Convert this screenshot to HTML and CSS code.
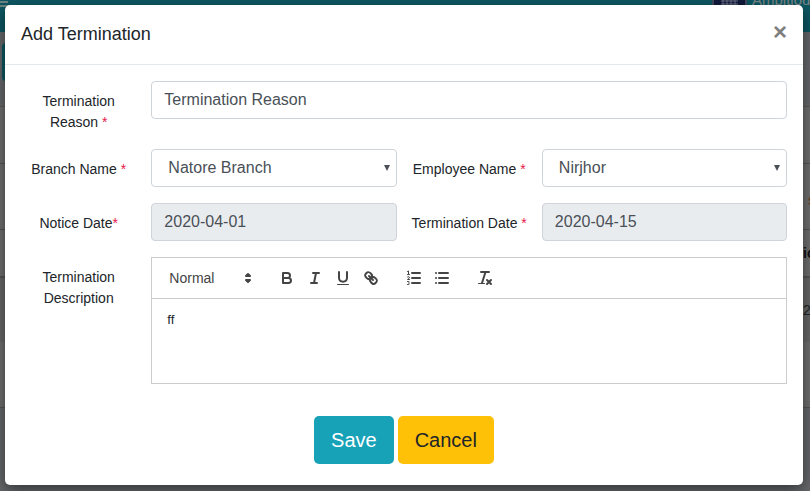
FILE: index.html
```html
<!DOCTYPE html>
<html lang="en">
<head>
<meta charset="utf-8">
<title>Add Termination</title>
<link rel="stylesheet" href="styles.css">
</head>
<body>
<div class="page" aria-hidden="true">
  <div class="navbar">
    <svg class="menu" width="8" height="10" viewBox="0 0 8 10"><path d="M0 2h8M0 6h8" stroke="#6f8385" stroke-width="2"/></svg>
    <div class="brand">
      <svg class="brand-logo" width="35" height="5" viewBox="0 0 35 5"><path fill="#111a3c" d="M0 0h35v5H0z"/><path d="M1 0v5M34 0v5" stroke="#76797d"/><path d="M9 1h17M9 4h17M11 0v5M15 0v5M19 0v5M23 0v5" stroke="#6d7185"/></svg>
      <span class="brand-name">Ambitious</span>
    </div>
  </div>
  <div class="heading-bar"><span class="add-tab"></span></div>
  <div class="panel">
    <div class="panel-line filter"></div>
    <div class="panel-line search"><span>s</span></div>
    <div class="panel-line head"><b>ic</b></div>
    <div class="panel-line cell"><span>2</span></div>
    <div class="panel-line rest"></div>
  </div>
</div>
<main class="modal" role="dialog" aria-labelledby="modal-title">
  <header class="modal-header">
    <h1 id="modal-title">Add Termination</h1>
    <button class="close" type="button" aria-label="Close">×</button>
  </header>
  <form class="modal-body">
    <div class="form-grid">
      <label for="reason">Termination Reason <span class="req">*</span></label>
      <input class="control wide" id="reason" type="text" placeholder="Termination Reason">
      <label for="branch">Branch Name <span class="req">*</span></label>
      <div class="select-wrap"><select class="control" id="branch"><option>Natore Branch</option></select></div>
      <label for="employee">Employee Name <span class="req">*</span></label>
      <div class="select-wrap"><select class="control" id="employee"><option>Nirjhor</option></select></div>
      <label for="notice">Notice Date<span class="req">*</span></label>
      <input class="control" id="notice" type="text" value="2020-04-01" readonly>
      <label for="date">Termination Date <span class="req">*</span></label>
      <input class="control" id="date" type="text" value="2020-04-15" readonly>
      <label for="description">Termination Description</label>
      <div class="editor wide">
        <div class="toolbar">
          <button class="format" type="button">Normal
            <svg width="18" height="18" viewBox="0 0 18 18"><path class="solid" d="M7 11 9 13 11 11zM7 7 9 5 11 7z"/></svg>
          </button>
          <div class="tools">
            <button type="button" aria-label="Bold"><svg viewBox="0 0 18 18"><path d="M5 4h4.500a2.500 2.500 0 0 1 0 5H5zM5 9h5.500a2.500 2.500 0 0 1 0 5H5z"/></svg></button>
            <button type="button" aria-label="Italic"><svg viewBox="0 0 18 18"><path d="M7 4h6M5 14h6M8 14l2-10"/></svg></button>
            <button type="button" aria-label="Underline"><svg viewBox="0 0 18 18"><path d="M5 3v6a4.012 4.012 0 0 0 8 0V3"/><rect class="fill" x="3" y="15" width="12" height="1" rx=".5"/></svg></button>
            <button type="button" aria-label="Link"><svg viewBox="0 0 18 18"><path class="solid" d="M7 7l4 4"/><path d="M8.900 4.577a3.476 3.476 0 0 1 .36 4.679A3.476 3.476 0 0 1 4.577 8.900C3.185 7.500 2.035 6.400 4.217 4.217S7.500 3.185 8.900 4.577zM13.423 9.100a3.476 3.476 0 0 0-4.679-.36 3.476 3.476 0 0 0 .36 4.679c1.392 1.392 2.500 2.542 4.679.36s1.031-3.287-.36-4.679z"/></svg></button>
          </div>
          <div class="tools">
            <button type="button" aria-label="Ordered list"><svg viewBox="0 0 18 18"><path d="M7 4h8M7 9h8M7 14h8"/><path class="thin" d="M2.500 2.500l1-.5v3.500M2.500 5.500h2M2.500 8q1-1 1.800 0t-1.800 2.500h2M2.500 12.500h1.300q1 1-.3 1.500 1.500.5.300 1.500H2.500"/></svg></button>
            <button type="button" aria-label="Bullet list"><svg viewBox="0 0 18 18"><path d="M6 4h9M6 9h9M6 14h9M3 4h.01M3 9h.01M3 14h.01"/></svg></button>
          </div>
          <div class="tools">
            <button type="button" aria-label="Clear formatting"><svg viewBox="0 0 18 18"><path d="M5 3h8M6 14 9.500 3M11 11l4 4M15 11l-4 4"/><rect class="fill" x="2" y="14" width="7" height="1" rx=".5"/></svg></button>
          </div>
        </div>
        <textarea id="description">ff</textarea>
      </div>
    </div>
    <div class="actions">
      <button class="btn save" type="submit">Save</button>
      <button class="btn cancel" type="button">Cancel</button>
    </div>
  </form>
</main>
</body>
</html>
```
FILE: styles.css
```css
* { box-sizing: border-box; }
body {
  margin: 0;
  min-height: 100vh;
  background: #66686b;
  font-family: "Liberation Sans", Arial, sans-serif;
  font-size: 14px;
  color: #212529;
}
button, input, select, textarea { font: inherit; color: inherit; }

/* dimmed page under the dialog */
.page {
  position: absolute;
  inset: 0;
  overflow: hidden;
}
.navbar {
  display: flex;
  justify-content: space-between;
  align-items: flex-start;
  height: 32px;
  background: #0d5863;
}
.brand { display: flex; gap: 5px; width: 98px; }
.brand-logo { flex: none; }
.brand-name {
  margin-top: -8px;
  font-size: 15px;
  line-height: 16px;
  color: #7f8788;
}
.heading-bar {
  height: 75px;
  padding: 11px 2px;
  border-bottom: 1px solid #5b5b5b;
}
.add-tab {
  display: block;
  width: 40px;
  height: 38px;
  border-radius: 4px;
  background: #0d5863;
}
.panel { background: #6f6f6f; }
.panel-line {
  display: flex;
  align-items: center;
  justify-content: flex-end;
  border-bottom: 1px solid #555;
}
.filter { height: 57px; }
.search { height: 66px; padding-top: 6px; color: #6b4218; }
.search span { width: 2px; }
.head { height: 48px; border-bottom: 2px solid #555; color: #111; }
.head b { width: 7px; }
.cell { height: 64px; background: #686868; border-bottom: 0; }
.cell span { width: 7px; }
.rest { height: 66px; }

.modal {
  position: relative;
  margin: 5px 7px 6px 5px;
  border-radius: 5px;
  background: #fff;
  box-shadow: 0 5px 15px rgba(0, 0, 0, .5);
}
.modal-header {
  display: flex;
  align-items: center;
  justify-content: space-between;
  height: 60px;
  padding: 0 16px;
  border-bottom: 1px solid #e3e8ec;
}
h1 { margin: 0; font-size: 18px; font-weight: 400; line-height: 27px; }
.close {
  padding: 0 0 6px;
  border: 0;
  background: none;
  color: #7f7f7f;
  font-size: 24px;
  font-weight: 700;
  line-height: 24px;
}
.modal-body { padding: 16px 16px 21px; }
.form-grid {
  display: grid;
  grid-template-columns: 8fr 17fr 8fr 17fr;
  gap: 16px 15px;
  align-items: start;
}
label { padding-top: 10px; line-height: 21px; text-align: center; }
.req { color: #e6194b; }
.wide { grid-column: span 3; }
.control {
  display: block;
  width: 100%;
  height: 38px;
  padding: 0 12px;
  border: 1px solid #ced4da;
  border-radius: 4px;
  background: #fff;
  color: #495057;
  font-size: 16px;
}
.control::placeholder { color: #495057; opacity: 1; }
.control:read-only:not(select) { background: #e9ecef; }
select.control { padding: 0 16px 2px; appearance: none; }
.select-wrap { display: grid; align-items: center; }
.select-wrap > *, .select-wrap::after { grid-area: 1 / 1; }
.select-wrap::after {
  content: "";
  justify-self: end;
  margin-right: 7px;
  border: 3px solid transparent;
  border-top: 6px solid #495057;
  border-bottom: 0;
  pointer-events: none;
}

.editor { border: 1px solid #ccc; }
.toolbar {
  display: flex;
  gap: 15px;
  height: 41px;
  padding: 8px;
  border-bottom: 1px solid #ccc;
}
.toolbar button {
  width: 28px;
  height: 24px;
  padding: 3px 5px;
  border: 0;
  background: none;
  color: #444;
}
.toolbar .format {
  display: flex;
  align-items: center;
  justify-content: space-between;
  width: 98px;
  padding: 0 1px 0 9px;
}
.tools { display: flex; }
.toolbar svg { display: block; }
.tools svg { width: 18px; height: 18px; }
.toolbar path {
  fill: none;
  stroke: #444;
  stroke-width: 2;
  stroke-linecap: round;
  stroke-linejoin: round;
}
.toolbar .fill { fill: #444; stroke: none; }
.toolbar .solid { fill: #444; }
.toolbar .thin { stroke-width: 1; }
textarea {
  display: block;
  width: 100%;
  height: 84px;
  padding: 12px 15px;
  border: 0;
  resize: none;
  background: none;
  font-size: 13px;
  line-height: 18px;
}
.actions {
  display: flex;
  justify-content: center;
  gap: 4px;
  margin-top: 32px;
}
.btn {
  height: 48px;
  padding: 0 17px;
  border: 0;
  border-radius: 5px;
  font-size: 20px;
}
.save { background: #17a2b8; color: #fff; }
.cancel { background: #ffc107; color: #212529; }
```
